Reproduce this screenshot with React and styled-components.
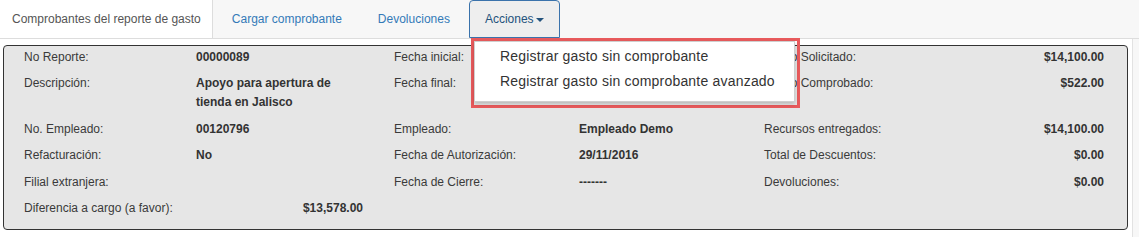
import React from 'react';
import styled, { createGlobalStyle } from 'styled-components';

const GlobalStyle = createGlobalStyle`
  * { box-sizing: border-box; }
  body {
    margin: 0;
    background: #f7f7f7;
    font-family: "Liberation Sans", Arial, Helvetica, sans-serif;
    color: #333;
  }
`;

const rows = [
  [
    { label: 'No Reporte:', value: '00000089' },
    { label: 'Fecha inicial:', value: '' },
    { label: 'Monto Solicitado:', value: '$14,100.00' },
  ],
  [
    { label: 'Descripción:', value: 'Apoyo para apertura de tienda en Jalisco' },
    { label: 'Fecha final:', value: '' },
    { label: 'Monto Comprobado:', value: '$522.00' },
  ],
  [
    { label: 'No. Empleado:', value: '00120796' },
    { label: 'Empleado:', value: 'Empleado Demo' },
    { label: 'Recursos entregados:', value: '$14,100.00' },
  ],
  [
    { label: 'Refacturación:', value: 'No' },
    { label: 'Fecha de Autorización:', value: '29/11/2016' },
    { label: 'Total de Descuentos:', value: '$0.00' },
  ],
  [
    { label: 'Filial extranjera:', value: '' },
    { label: 'Fecha de Cierre:', value: '-------' },
    { label: 'Devoluciones:', value: '$0.00' },
  ],
];

const App = () => {
  return (
    <Page>
      <GlobalStyle />
      <Tabs>
        <Tab $active>Comprobantes del reporte de gasto</Tab>
        <Tab>Cargar comprobante</Tab>
        <Tab>Devoluciones</Tab>
        <Tab $open>
          Acciones<Caret />
          <Highlight>
            <Menu>
              <MenuItem>Registrar gasto sin comprobante</MenuItem>
              <MenuItem>Registrar gasto sin comprobante avanzado</MenuItem>
            </Menu>
          </Highlight>
        </Tab>
      </Tabs>
      <Content>
        <Panel>
          {rows.map((row, i) =>
            row.map((f, j) => (
              <Field key={`${i}-${j}`} $group={j}>
                <Label>{f.label}</Label>
                <Value $right={j === 2}>{f.value}</Value>
              </Field>
            ))
          )}
          <Field $group={0}>
            <Label>Diferencia a cargo (a favor):</Label>
            <Value $right>$13,578.00</Value>
          </Field>
        </Panel>
      </Content>
    </Page>
  );
};

export default App;

const Page = styled.div`
  width: 1139px;
  min-height: 237px;
  background: #f7f7f7;
`;

const Tabs = styled.ul`
  display: flex;
  margin: 0;
  padding: 0;
  list-style: none;
  height: 39px;
  border-bottom: 1px solid #dddddd;
`;

const Tab = styled.li`
  position: relative;
  height: 38px;
  line-height: 37px;
  margin-right: 2px;
  padding: 0 ${(p) => (p.$open ? '15px' : '16px')};
  font-size: 12px;
  cursor: pointer;
  color: ${(p) => (p.$active ? '#555555' : p.$open ? '#23527c' : '#337ab7')};
  background: ${(p) => (p.$active ? '#ffffff' : p.$open ? '#eeeeee' : 'transparent')};
  border: 1px solid ${(p) => (p.$open ? '#3a72ab' : 'transparent')};
  border-radius: 4px 4px 0 0;
  ${(p) =>
    p.$active &&
    `border: none;
     border-right: 1px solid #dddddd;
     border-radius: 0;
     padding: 1px 11px 0 12px;`}
`;

const Caret = styled.span`
  display: inline-block;
  width: 0;
  height: 0;
  margin-left: 2px;
  vertical-align: middle;
  border-top: 4px solid currentColor;
  border-left: 4px solid transparent;
  border-right: 4px solid transparent;
`;

const Highlight = styled.div`
  position: absolute;
  top: 37px;
  left: 1px;
  z-index: 10;
  border: 3px solid #e85a5c;
  padding: 0 2px 3px 0;
`;

const Menu = styled.ul`
  width: 321px;
  margin: 0;
  padding: 2px 0 7px;
  list-style: none;
  background: #ffffff;
  border: 1px solid #cfcfcf;
  box-shadow: 0 2px 4px rgba(0, 0, 0, 0.2);
`;

const MenuItem = styled.li`
  padding: 0 20px 0 25px;
  line-height: 25px;
  font-size: 14px;
  letter-spacing: 0.2px;
  color: #333333;
  white-space: nowrap;
`;

const Content = styled.div`
  width: 1133px;
  background: #ffffff;
  border-right: 1px solid #e2e2e2;
  padding: 6px 4px 8px 3px;
`;

const Panel = styled.div`
  display: grid;
  grid-template-columns: 370px 370px 340px;
  row-gap: 7.5px;
  padding: 1.5px 24px 10.5px 20px;
  background: #e6e6e6;
  border: 1px solid #333333;
  border-radius: 4px;
  font-size: 12px;
  line-height: 19px;
`;

const Field = styled.div`
  display: grid;
  grid-template-columns: ${(p) =>
    p.$group === 0 ? '172px 167px' : p.$group === 1 ? '185px 1fr' : '1fr auto'};
  grid-column: ${(p) => p.$group + 1};
`;

const Label = styled.span`
  color: #3a3a3a;
`;

const Value = styled.span`
  font-weight: bold;
  color: #333333;
  text-align: ${(p) => (p.$right ? 'right' : 'left')};
`;
